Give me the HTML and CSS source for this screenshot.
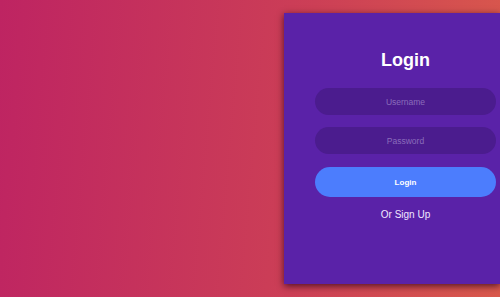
FILE: index.html
```html
<!DOCTYPE html>
<html lang="en">
<head>
    <meta charset="UTF-8">
    <meta name="viewport" content="width=device-width, initial-scale=1.0">
    <title>Login</title>
    <link rel="stylesheet" href="styles.css">
</head>
<body>
    <div class="login-box">
        <h1 class="title">Login</h1>
        <form class="login-form">
            <input type="text" class="field" placeholder="Username">
            <input type="password" class="field" placeholder="Password">
            <button type="button" class="login-btn">Login</button>
        </form>
        <a href="#" class="signup">Or Sign Up</a>
    </div>
</body>
</html>
```

FILE: styles.css
```css
:root {
    --card: #5a22a8;
    --field: #4b1c8e;
    --azul: #4c7dfd;
    --texto: #ffffff;
}

* {
    margin: 0;
    padding: 0;
    box-sizing: border-box;
    font-family: "Liberation Sans", Arial, sans-serif;
}

html, body {
    height: 100%;
    overflow: hidden;
}

body {
    background: linear-gradient(95deg, #be2462 0%, #cc3f56 60%, #d9594c 100%);
    display: flex;
    align-items: flex-start;
    padding: 13px 0 0 284px;
}

/* o card continua além da borda direita, só o lado esquerdo aparece */
.login-box {
    flex: 1;
    height: 271px;
    background-color: var(--card);
    box-shadow: 0 2px 7px rgba(40, 0, 20, 0.75);
    padding: 37px 0 0 31px;
    display: flex;
    flex-direction: column;
    align-items: flex-start;
}

.title,
.login-form,
.signup {
    width: 181px;
}

.title {
    color: var(--texto);
    font-size: 18px;
    font-weight: bold;
    text-align: center;
    line-height: 21px;
    margin-bottom: 17px;
}

.login-form {
    display: flex;
    flex-direction: column;
}

.field {
    height: 27px;
    border: none;
    outline: none;
    border-radius: 14px;
    background-color: var(--field);
    color: var(--texto);
    font-size: 8.5px;
    text-align: center;
    margin-bottom: 12px;
}

.field::placeholder {
    color: #8a6cbb;
}

.field + .field {
    margin-bottom: 13px;
}

.login-btn {
    height: 30px;
    border: none;
    border-radius: 15px;
    background-color: var(--azul);
    color: var(--texto);
    font-size: 8px;
    font-weight: bold;
    cursor: pointer;
}

.signup {
    display: block;
    margin-top: 12px;
    color: #f1e8ff;
    font-size: 10px;
    line-height: 12px;
    text-align: center;
    text-decoration: none;
}
```
